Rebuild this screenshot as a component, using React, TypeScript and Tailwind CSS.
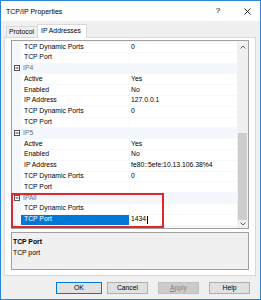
type Row =
  | { kind: "cat"; name: string }
  | { kind: "prop"; name: string; value?: string; selected?: boolean };

const rows: Row[] = [
  { kind: "prop", name: "TCP Dynamic Ports", value: "0" },
  { kind: "prop", name: "TCP Port", value: "" },
  { kind: "cat", name: "IP4" },
  { kind: "prop", name: "Active", value: "Yes" },
  { kind: "prop", name: "Enabled", value: "No" },
  { kind: "prop", name: "IP Address", value: "127.0.0.1" },
  { kind: "prop", name: "TCP Dynamic Ports", value: "0" },
  { kind: "prop", name: "TCP Port", value: "" },
  { kind: "cat", name: "IP5" },
  { kind: "prop", name: "Active", value: "Yes" },
  { kind: "prop", name: "Enabled", value: "No" },
  { kind: "prop", name: "IP Address", value: "fe80::5efe:10.13.106.38%4" },
  { kind: "prop", name: "TCP Dynamic Ports", value: "0" },
  { kind: "prop", name: "TCP Port", value: "" },
  { kind: "cat", name: "IPAll" },
  { kind: "prop", name: "TCP Dynamic Ports", value: "" },
  { kind: "prop", name: "TCP Port", value: "1434", selected: true },
];

const Collapse = () => (
  <svg width="6" height="6" viewBox="0 0 6 6" className="block">
    <rect x="0.5" y="0.5" width="5" height="5" fill="#fff" stroke="#555" strokeWidth="1" />
    <line x1="1.5" y1="3" x2="4.5" y2="3" stroke="#333" strokeWidth="1" />
  </svg>
);

const GridRow = ({ row }: { row: Row }) => {
  if (row.kind === "cat") {
    return (
      <div className="flex h-[9.8px] items-center">
        <div className="flex w-[8px] justify-center pl-[1px]">
          <Collapse />
        </div>
        <span className="pl-[3px] text-[#6d6d6d]">{row.name}</span>
      </div>
    );
  }
  return (
    <div className="flex h-[9.8px] gap-[1px]">
      <div className="w-[8px]" />
      <div
        className={
          row.selected
            ? "flex w-[108px] items-center bg-[#0078d7] pl-[3px] text-white"
            : "flex w-[108px] items-center bg-white pl-[3px]"
        }
      >
        {row.name}
      </div>
      <div className="flex flex-1 items-center bg-white pl-[1px]">
        {row.value}
        {row.selected && <span className="ml-[1px] h-[8px] w-[1px] bg-black" />}
      </div>
    </div>
  );
};

const Arrow = ({ up }: { up?: boolean }) => (
  <svg width="6" height="4" viewBox="0 0 6 4" className="block">
    <polyline
      points={up ? "0.5,3.5 3,1 5.5,3.5" : "0.5,0.5 3,3 5.5,0.5"}
      fill="none"
      stroke="#606060"
      strokeWidth="1"
    />
  </svg>
);

const Button = ({ label, className }: { label: React.ReactNode; className: string }) => (
  <div className={`flex h-[12px] items-center justify-center border ${className}`}>{label}</div>
);

export default function App() {
  return (
    <div className="flex h-[300px] w-[261px] flex-col border border-[#2a86d6] bg-[#f0f0f0] font-['Liberation_Sans',Arial,sans-serif] text-[6.8px] leading-none text-black">
      {/* title bar */}
      <div className="flex h-[20px] items-center bg-white pl-[5px]">
        <span className="text-[7px]">TCP/IP Properties</span>
        <div className="ml-auto flex h-full">
          <div className="flex w-[26px] items-center justify-center text-[8px]">?</div>
          <div className="ml-[3px] flex w-[26px] items-center justify-center">
            <svg width="7" height="7" viewBox="0 0 7 7" className="block">
              <path d="M0.5 0.5 L6.5 6.5 M6.5 0.5 L0.5 6.5" stroke="#111" strokeWidth="0.9" />
            </svg>
          </div>
        </div>
      </div>

      {/* tabs */}
      <div className="mt-[3px] flex h-[13px] items-end pl-[5px]">
        <div className="flex h-[11px] w-[31px] items-center border-l border-t border-[#d9d9d9] pl-[2px]">
          Protocol
        </div>
        <div className="relative z-10 mb-[-1px] flex h-[14px] w-[50px] items-center border-x border-t border-[#d9d9d9] bg-white pb-[1px] pl-[3px]">
          IP Addresses
        </div>
      </div>

      {/* tab page */}
      <div className="ml-[3px] mr-[4px] flex flex-col border border-[#d9d9d9] bg-white px-[6px] pb-[5px] pt-[2px]">
        <div className="relative flex h-[189px] border border-[#a0a0a0]">
          <div className="flex w-[225px] flex-col gap-[1px] bg-[#f4f7fc] pt-[1px]">
            {rows.map((r, i) => (
              <GridRow key={i} row={r} />
            ))}
          </div>
          <div className="flex w-[11px] flex-col bg-[#f0f0f0]">
            <div className="flex h-[11px] items-center justify-center">
              <Arrow up />
            </div>
            <div className="flex flex-1 flex-col px-[1px]">
              <div className="h-[81px]" />
              <div className="flex-1 bg-[#cdcdcd]" />
            </div>
            <div className="flex h-[8px] items-center justify-center">
              <Arrow />
            </div>
          </div>
          <div className="absolute left-[-1px] top-[152px] h-[35px] w-[153px] border-2 border-[#e3262c]" />
        </div>

        <div className="mt-[3px] h-[38px] border border-[#a0a0a0] bg-[#f0f0f0] pl-[1px] pt-[3px] leading-[11px]">
          <div className="font-bold">TCP Port</div>
          <div>TCP port</div>
        </div>
      </div>

      {/* buttons */}
      <div className="mt-[6px] flex justify-end pr-[10px]">
        <Button label="OK" className="w-[46px] border-[#0078d7] bg-[#e1e1e1]" />
        <Button label="Cancel" className="ml-[5px] w-[41px] border-[#adadad] bg-[#e1e1e1]" />
        <Button
          label={
            <span>
              <span className="underline">A</span>pply
            </span>
          }
          className="ml-[10px] w-[41px] border-[#bfbfbf] bg-[#cccccc] text-[#838383]"
        />
        <Button label="Help" className="ml-[10px] w-[41px] border-[#adadad] bg-[#e1e1e1]" />
      </div>
    </div>
  );
}
